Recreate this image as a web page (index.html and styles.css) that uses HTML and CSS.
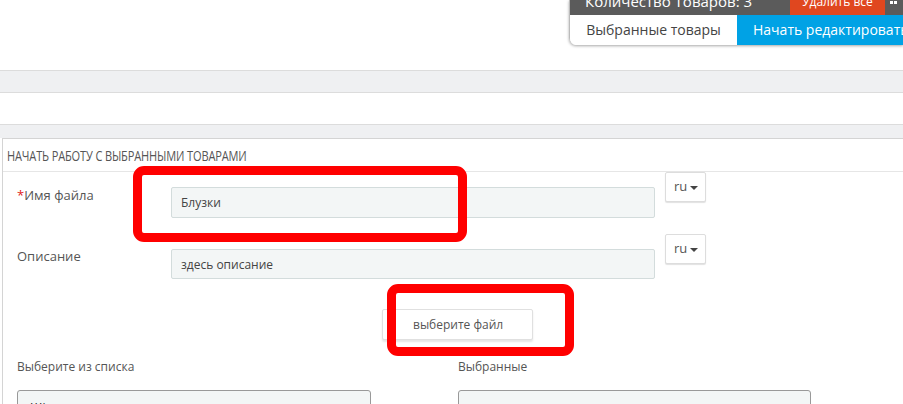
FILE: index.html
```html
<!DOCTYPE html>
<html lang="ru">
<head>
<meta charset="utf-8">
<link rel="stylesheet" href="styles.css">
</head>
<body>
<div class="top">
  <div class="widget">
    <div class="w-row1">
      <div class="w-count">Количество Товаров: 3</div>
      <div class="w-del">Удалить все</div>
      <div class="w-icon"><svg width="8" height="8" viewBox="0 0 8 8"><rect x="0" y="0" width="3" height="3" fill="#fff"/><rect x="4" y="0" width="3" height="3" fill="#fff"/><rect x="0" y="4" width="3" height="3" fill="#fff"/><rect x="4" y="4" width="3" height="3" fill="#fff"/></svg></div>
    </div>
    <div class="w-row2">
      <div class="w-sel">Выбранные товары</div>
      <div class="w-edit">Начать редактировать</div>
    </div>
  </div>
</div>
<div class="band band1"></div>
<div class="gap"></div>
<div class="band band2"></div>
<div class="panel">
  <div class="panel-head"><span class="head-text">НАЧАТЬ РАБОТУ С ВЫБРАННЫМИ ТОВАРАМИ</span></div>
  <div class="panel-body">
    <div class="row row1">
      <label class="lbl"><span class="req">*</span>Имя файла</label>
      <div class="inp">Блузки</div>
      <div class="lang">ru <span class="caret"></span></div>
    </div>
    <div class="row row2">
      <label class="lbl">Описание</label>
      <div class="inp">здесь описание</div>
      <div class="lang">ru <span class="caret"></span></div>
    </div>
    <div class="filerow">
      <div class="filebtn">выберите файл</div>
    </div>
    <div class="lists">
      <div class="list">
        <div class="list-title">Выберите из списка</div>
        <div class="list-box"><span class="item">Шi</span></div>
      </div>
      <div class="list">
        <div class="list-title">Выбранные</div>
        <div class="list-box"></div>
      </div>
    </div>
  </div>
</div>
<div class="mark mark1"></div>
<div class="mark mark2"></div>
</body>
</html>
```
FILE: styles.css
```css
* { box-sizing: border-box; }
html, body { margin: 0; padding: 0; background: #fff; }
body { font-family: "Open Sans", "DejaVu Sans", sans-serif; color: #555; width: 903px; height: 404px; overflow: hidden; position: relative; }

.top { height: 70px; display: flex; justify-content: flex-end; }
.widget { width: 334px; height: 45px; display: flex; flex-direction: column; border-bottom-left-radius: 7px; box-shadow: 0 1px 3px rgba(0,0,0,0.35); overflow: hidden; border-left: 1px solid #bbb; }
.w-row1 { height: 15px; display: flex; background: #5b5b5b; color: #fff; overflow: hidden; }
.w-count { flex: 0 0 220px; font-size: 15px; line-height: 15px; padding-left: 15px; margin-top: -6px; white-space: nowrap; }
.w-del { flex: 0 0 95px; background: #e0471f; font-size: 12px; line-height: 14px; text-align: center; margin-top: -5px; white-space: nowrap; }
.w-icon { flex: 1; display: flex; justify-content: center; align-items: flex-start; padding-top: 1px; margin-top: -4px; }
.w-row2 { height: 30px; display: flex; }
.w-sel { flex: 0 0 167px; background: #fff; color: #444; font-size: 14px; line-height: 30px; text-align: center; }
.w-edit { flex: 1; background: #00a2e5; color: #fff; font-size: 14px; line-height: 30px; padding-left: 16px; white-space: nowrap; overflow: hidden; }

.band { background: #eff0f2; }
.band1 { height: 23px; border-top: 1px solid #dcdcdc; border-bottom: 1px solid #dcdcdc; }
.gap { height: 31px; }
.band2 { height: 14px; border-top: 1px solid #dcdcdc; }

.panel { margin-left: 2px; border-left: 1px solid #d4d4d4; border-top: 1px solid #d4d4d4; background: #fff; height: 300px; }
.panel-head { height: 33px; border-bottom: 1px solid #e6e6e6; padding-left: 4px; line-height: 32px; color: #555; white-space: nowrap; }
.head-text { display: inline-block; font-family: "Open Sans", sans-serif; font-size: 14px; letter-spacing: -0.2px; transform: scaleX(0.79); transform-origin: left center; }
.panel-body { padding: 0 0 0 14px; }
.row { display: flex; align-items: flex-start; }
.row1 { height: 62px; }
.row2 { height: 45px; }
.lbl { width: 154px; font-size: 13px; line-height: 16px; color: #555; margin-top: 15px; }
.row2 .lbl { margin-top: 14px; }
.req { color: #e02020; }
.inp { width: 484px; height: 31px; margin-top: 15px; background: #f3f6f6; border: 1px solid #d3dcdc; border-radius: 2px; font-size: 12px; line-height: 29px; padding-left: 9px; color: #444; }
.row2 .inp { height: 30px; }
.lang { margin-left: 10px; width: 41px; height: 30px; border: 1px solid #ddd; border-radius: 2px; box-shadow: 0 1px 1px rgba(0,0,0,0.12); font-size: 13px; line-height: 27px; padding-left: 8px; color: #555; background: #fff; }
.caret { display: inline-block; width: 0; height: 0; border-left: 4px solid transparent; border-right: 4px solid transparent; border-top: 4px solid #444; vertical-align: middle; margin-left: -1px; }

.filerow { display: flex; padding-left: 365px; margin-top: 30px; }
.filebtn { width: 151px; height: 31px; border: 1px solid #e0e0e0; border-radius: 2px; box-shadow: 0 2px 2px rgba(0,0,0,0.1); font-size: 12px; line-height: 29px; padding-left: 30px; color: #555; background: #fff; }

.lists { display: flex; gap: 87px; margin-top: 19px; }
.list { width: 354px; }
.list + .list { width: 353px; }
.list-title { font-size: 12px; line-height: 16px; color: #555; }
.list-box { margin-top: 15px; height: 40px; background: #f3f6f6; border: 1px solid #999; border-radius: 3px; padding: 8px 0 0 12px; font-size: 12px; color: #222; }

.mark { position: absolute; border: 9px solid #ff0000; border-radius: 11px; }
.mark1 { left: 133px; top: 166px; width: 334px; height: 76px; }
.mark2 { left: 387px; top: 284px; width: 187px; height: 72px; }
```
